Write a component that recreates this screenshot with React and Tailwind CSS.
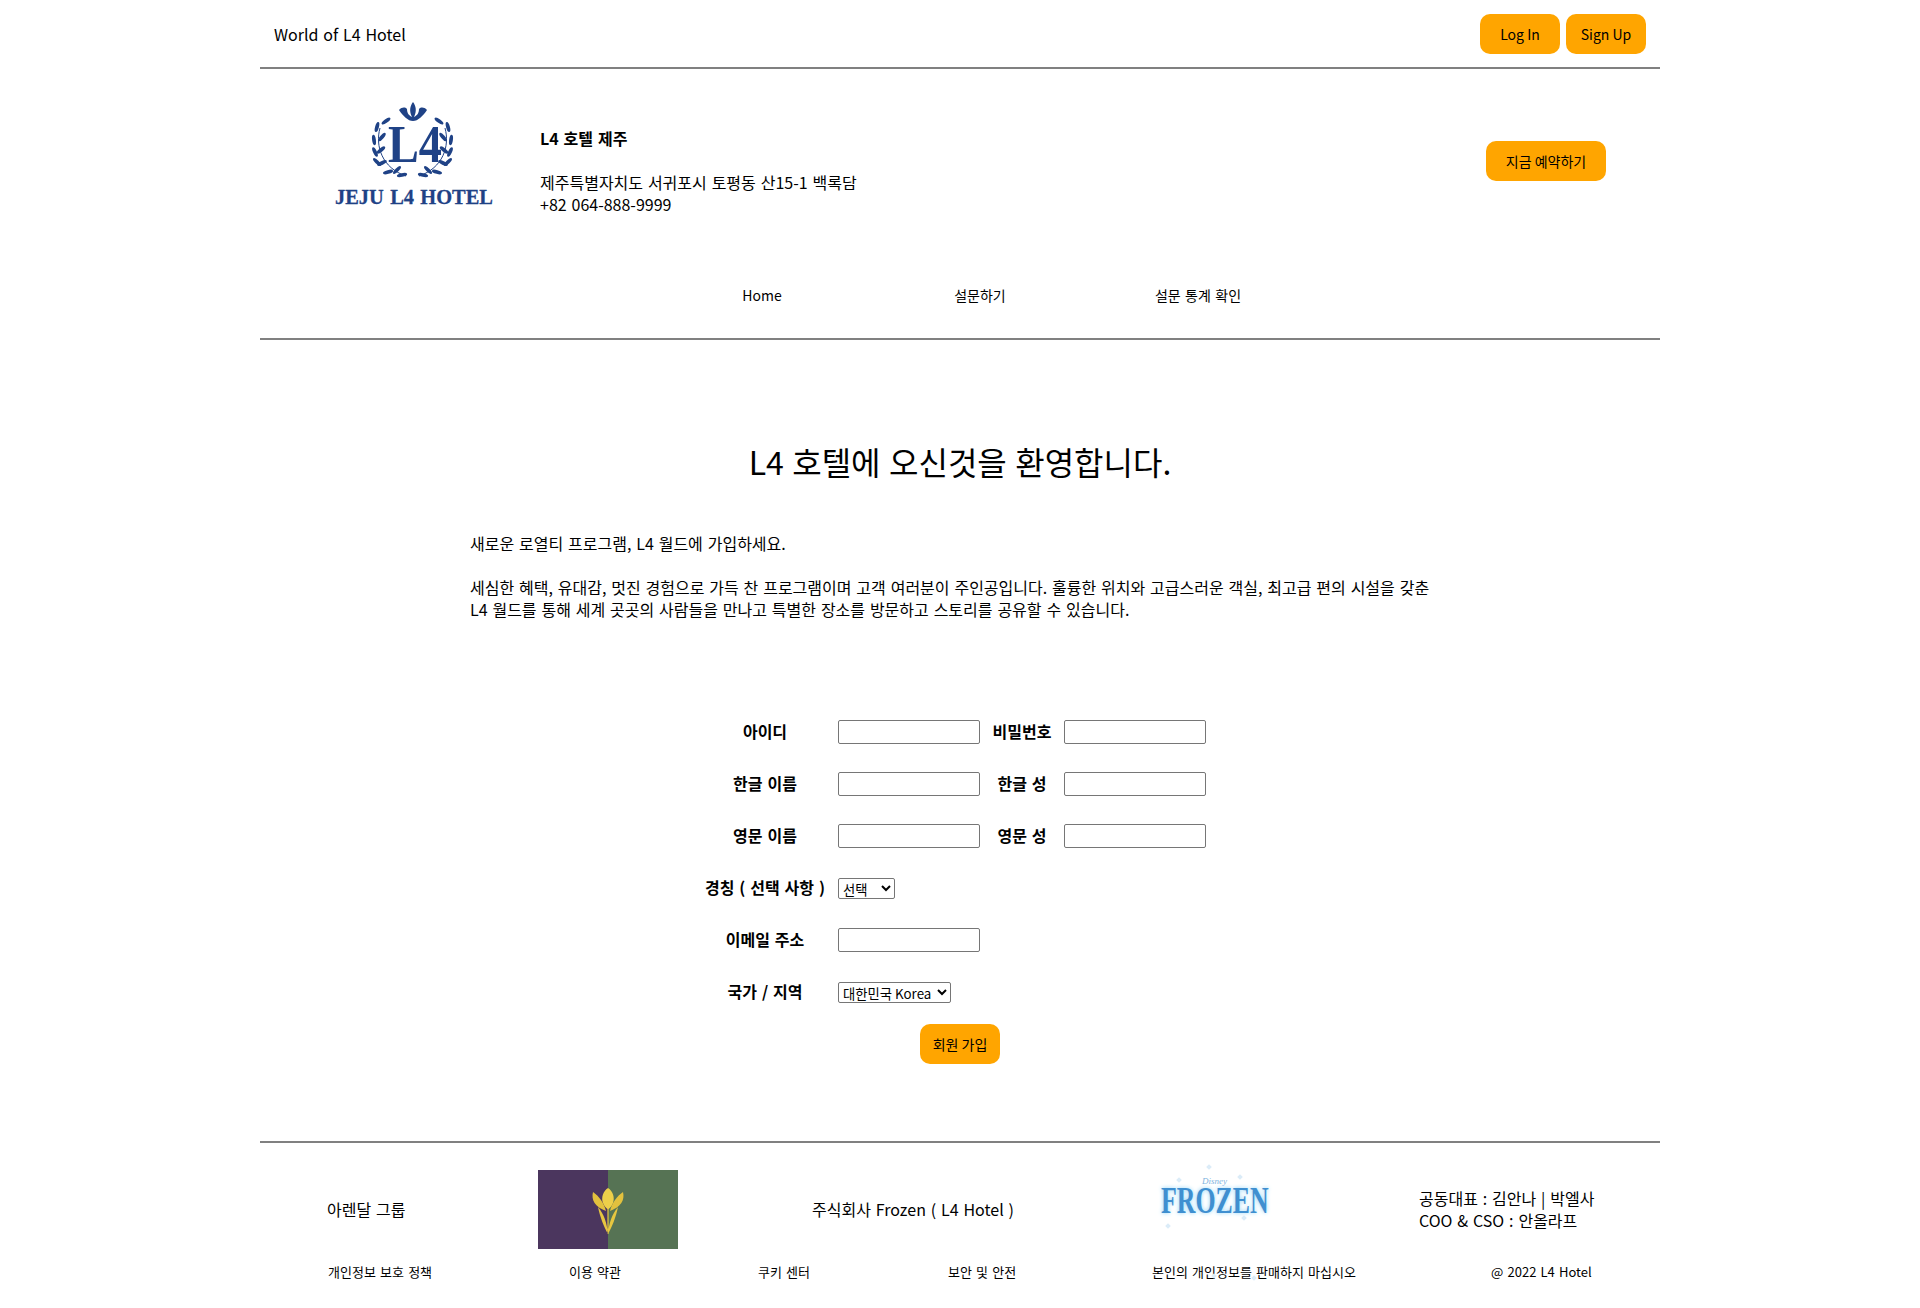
const font = "font-['Noto_Sans_CJK_KR',sans-serif] [word-spacing:0.08em]"

function OrangeButton({ children, className = '' }) {
  return (
    <button className={`h-10 rounded-[10px] bg-[#ffa500] text-[14px] text-black ${className}`}>
      {children}
    </button>
  )
}

// [x, y, rotation] of the left half, the right half is mirrored around x=92.5
const laurel = [
  [66, 31, 55], [57, 37, 15], [62, 47, 40], [54, 50, -8], [61, 60, 50], [55, 62, -25],
  [62, 73, 65], [57, 72, -45], [68, 82, 75], [77, 80, 45], [82, 85, 80],
]

// crown and wreath are drawn, the letters stay real text
function HotelLogo() {
  return (
    <svg width="190" height="130" viewBox="0 0 190 130" className="block">
      {laurel.map(([x, y, r], i) => (
        <g key={i} fill="#1f4286">
          <ellipse cx={x} cy={y} rx="1.9" ry="5.2" transform={`rotate(${r} ${x} ${y})`} />
          <ellipse cx={185 - x} cy={y} rx="1.9" ry="5.2" transform={`rotate(${-r} ${185 - x} ${y})`} />
        </g>
      ))}
      <path d="M60 38 C55 56 62 78 86 86 M125 38 C130 56 123 78 99 86" fill="none" stroke="#1f4286" strokeWidth="1" />
      <path d="M93 12 C90 16 89 21 92 27 C88 25 87 22 87 19 C85 17 82 17 79 20 C83 26 88 31 93 31 C98 31 103 26 107 20 C104 17 101 17 99 19 C99 22 98 25 94 27 C97 21 96 16 93 12Z" fill="#1f4286" />
      <text x="95" y="72" textAnchor="middle" fontFamily="Liberation Serif" fontWeight="700" fontSize="53" fill="#1f4286" textLength="54" lengthAdjust="spacingAndGlyphs">L4</text>
      <text x="94" y="114" textAnchor="middle" fontFamily="Liberation Serif" fontWeight="700" fontSize="22" fill="#1f4286" stroke="#1f4286" strokeWidth="0.3" textLength="158" lengthAdjust="spacingAndGlyphs">JEJU L4 HOTEL</text>
    </svg>
  )
}

function FlowerMark() {
  return (
    <div className="relative flex h-[79px] w-[140px]">
      <div className="w-[70px] bg-[#4b365e]" />
      <div className="w-[70px] bg-[#567354]" />
      <svg width="140" height="79" viewBox="0 0 140 79" className="absolute left-0 top-0">
        <path d="M70 18 C65 21 63 28 65 33 C66 36 68 38 69.4 39 L70.6 39 C72 38 74 36 75 33 C77 28 75 21 70 18Z" fill="#edcf4a" />
        <path d="M55 22 C53 30 57 37 68 41 C66 33 61 26 55 22Z M85 22 C87 30 83 37 72 41 C74 33 79 26 85 22Z" fill="#e2c13e" />
        <path d="M69.4 39 H70.6 V64 H69.4Z M60 37 C62 47 66 57 70 64 C69 53 66 44 60 37Z M80 37 C78 47 74 57 70 64 C71 53 74 44 80 37Z" fill="#e6c640" />
      </svg>
    </div>
  )
}

function FrozenMark() {
  const flakes = [
    'left-[67px] top-[1px]', 'left-[37px] top-[14px]', 'left-[98px] top-[11px]',
    'left-[26px] top-[60px]', 'left-[102px] top-[52px]', 'left-[72px] top-[110px]', 'left-[112px] top-[112px]',
  ]
  return (
    <div className="relative h-[90px] w-[150px]">
      <span className="absolute left-[62px] top-[13px] font-['Liberation_Serif',serif] text-[9px] italic leading-[9px] text-[#7fb4de]">Disney</span>
      <span className="absolute left-[21px] top-[23px] origin-left scale-x-[0.68] whitespace-nowrap font-['Liberation_Serif',serif] text-[38px] font-bold leading-[26px] text-[#3f8fd0] [text-shadow:0_0_5px_#8fd3f7]">
        FROZEN
      </span>
      {flakes.map(pos => (
        <span key={pos} className={`absolute ${pos} size-1 rotate-45 bg-[#dbecf8]`} />
      ))}
    </div>
  )
}

const inputCls = 'h-6 w-[142px] rounded-[2px] border border-[#767676] bg-white'

function Row({ label, label2, children }) {
  return (
    <div className="flex h-[52px] items-center">
      <label className="w-[134px] whitespace-nowrap pb-[2px] text-center font-bold">{label}</label>
      <div className="ml-[6px]">{children}</div>
      {label2 && (
        <>
          <label className="w-[84px] whitespace-nowrap pb-[2px] text-center font-bold">{label2}</label>
          <input className={inputCls} />
        </>
      )}
    </div>
  )
}

export default function App() {
  return (
    <div className={`mx-auto h-[1308px] w-[1400px] bg-white text-[16px] leading-[22px] text-black ${font}`}>
      {/* top bar */}
      <div className="flex h-[69px] items-center justify-between border-b-2 border-[#808080] pl-[14px] pr-[14px]">
        <span>World of L4 Hotel</span>
        <div className="flex gap-[6px]">
          <OrangeButton className="w-20">Log In</OrangeButton>
          <OrangeButton className="w-20">Sign Up</OrangeButton>
        </div>
      </div>

      {/* hotel info */}
      <div className="flex h-[152px] items-start">
        <div className="ml-[60px] mt-[21px] w-[190px]">
          <HotelLogo />
        </div>
        <div className="ml-[30px] mt-[58px]">
          <div className="font-bold">L4 호텔 제주</div>
          <div className="mt-[22px]">제주특별자치도 서귀포시 토평동 산15-1 백록담</div>
          <div>+82 064-888-9999</div>
        </div>
        <OrangeButton className="ml-auto mr-[54px] mt-[72px] w-[120px]">지금 예약하기</OrangeButton>
      </div>

      {/* nav */}
      <nav className="flex h-[119px] justify-center border-b-2 border-[#808080] pt-[63px] text-[14px]">
        <div className="ml-[40px] grid h-[22px] grid-cols-[218px_218px_218px] text-center">
          <a>Home</a>
          <a>설문하기</a>
          <a>설문 통계 확인</a>
        </div>
      </nav>

      <h1 className="mt-[99px] text-center text-[32px] leading-[44px]">L4 호텔에 오신것을 환영합니다.</h1>

      <div className="mx-[210px] mt-[49px]">
        <p>새로운 로열티 프로그램, L4 월드에 가입하세요.</p>
        <p className="mt-[22px]">
          세심한 혜택, 유대감, 멋진 경험으로 가득 찬 프로그램이며 고객 여러분이 주인공입니다. 훌륭한 위치와 고급스러운 객실, 최고급 편의 시설을 갖춘
          <br />
          L4 월드를 통해 세계 곳곳의 사람들을 만나고 특별한 장소를 방문하고 스토리를 공유할 수 있습니다.
        </p>
      </div>

      {/* sign up form */}
      <form className="ml-[438px] mt-[86px]">
        <Row label="아이디" label2="비밀번호"><input className={inputCls} /></Row>
        <Row label="한글 이름" label2="한글 성"><input className={inputCls} /></Row>
        <Row label="영문 이름" label2="영문 성"><input className={inputCls} /></Row>
        <Row label="경칭 ( 선택 사항 )">
          <select className="h-[21px] w-[57px] rounded-[2px] border border-[#767676] bg-white text-[13.33px]">
            <option>선택</option>
          </select>
        </Row>
        <Row label="이메일 주소"><input className={inputCls} /></Row>
        <Row label="국가 / 지역">
          <select className="h-[21px] w-[113px] rounded-[2px] border border-[#767676] bg-white text-[13.33px]">
            <option>대한민국 Korea</option>
          </select>
        </Row>
      </form>
      <div className="mt-[6px] flex justify-center">
        <OrangeButton className="w-20">회원 가입</OrangeButton>
      </div>

      {/* footer */}
      <footer className="mt-[77px] border-t-2 border-[#808080]">
        <div className="flex h-[110px] items-center pt-[22px]">
          <span className="ml-[67px] w-[211px]">아렌달 그룹</span>
          <FlowerMark />
          <span className="ml-[134px] w-[174px] whitespace-nowrap">주식회사 Frozen ( L4 Hotel )</span>
          <div className="ml-[154px]"><FrozenMark /></div>
          <div className="ml-[129px] whitespace-nowrap">
            <div>공동대표 : 김안나 | 박엘사</div>
            <div>COO &amp; CSO : 안올라프</div>
          </div>
        </div>
        <div className="mt-[8px] grid h-5 grid-cols-[241px_189px_190px_204px_339px_auto] pl-[68px] text-[13px]">
          <a>개인정보 보호 정책</a>
          <a>이용 약관</a>
          <a>쿠키 센터</a>
          <a>보안 및 안전</a>
          <a>본인의 개인정보를 판매하지 마십시오</a>
          <a>@ 2022 L4 Hotel</a>
        </div>
      </footer>
    </div>
  )
}
